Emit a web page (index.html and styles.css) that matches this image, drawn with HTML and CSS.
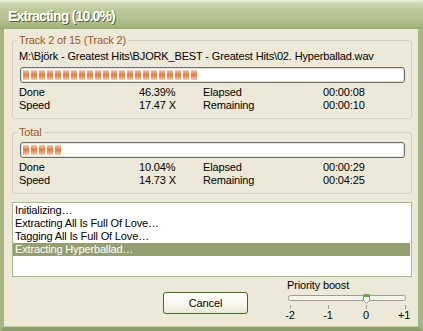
FILE: index.html
```html
<!DOCTYPE html>
<html lang="en">
  <head>
    <meta charset="UTF-8" />
    <meta name="viewport" content="width=device-width, initial-scale=1.0" />
    <title>Extracting (10.0%)</title>
    <link rel="stylesheet" href="styles.css">
  </head>
  <body>
    <div class="window">
      <div class="titlebar">Extracting (10.0%)</div>

      <div class="client">
        <fieldset class="group">
          <legend>Track 2 of 15 (Track 2)</legend>
          <div class="path">M:\Björk - Greatest Hits\BJORK_BEST - Greatest Hits\02. Hyperballad.wav</div>
          <div class="progress">
            <div class="progress-fill" style="width: 46.39%"></div>
          </div>
          <div class="stats">
            <span>Done</span><span>46.39%</span><span>Elapsed</span><span>00:00:08</span>
            <span>Speed</span><span>17.47 X</span><span>Remaining</span><span>00:00:10</span>
          </div>
        </fieldset>

        <fieldset class="group group-total">
          <legend>Total</legend>
          <div class="progress">
            <div class="progress-fill" style="width: 10.04%"></div>
          </div>
          <div class="stats">
            <span>Done</span><span>10.04%</span><span>Elapsed</span><span>00:00:29</span>
            <span>Speed</span><span>14.73 X</span><span>Remaining</span><span>00:04:25</span>
          </div>
        </fieldset>

        <div class="log">
          <div class="log-item">Initializing…</div>
          <div class="log-item">Extracting All Is Full Of Love…</div>
          <div class="log-item">Tagging All Is Full Of Love…</div>
          <div class="log-item selected">Extracting Hyperballad…</div>
        </div>

        <div class="footer">
          <button class="btn-cancel">Cancel</button>
          <div class="priority">
            <div class="priority-label">Priority boost</div>
            <svg class="slider" width="128" height="16" viewBox="0 0 128 16">
              <rect x="5.5" y="2.5" width="117" height="5" rx="2" fill="#f4f4ee" stroke="#9d9d92" />
              <line x1="7.5" y1="12" x2="7.5" y2="16" stroke="#a3a397" />
              <line x1="45.5" y1="12" x2="45.5" y2="16" stroke="#a3a397" />
              <line x1="83.5" y1="12" x2="83.5" y2="16" stroke="#a3a397" />
              <line x1="122.5" y1="12" x2="122.5" y2="16" stroke="#a3a397" />
              <path d="M80.5 1.5 h6 v6 l-3 3 l-3 -3 z" fill="#f7f7f2" stroke="#8c9c70" />
              <rect x="81" y="1" width="5" height="3" fill="#5fb33f" />
            </svg>
            <div class="ticks">
              <span>-2</span><span>-1</span><span>0</span><span>+1</span>
            </div>
          </div>
        </div>
      </div>
    </div>
  </body>
</html>
```

FILE: styles.css
```css
body {
  margin: 0;
  padding: 0;
  font-family: "Liberation Sans", Arial, sans-serif;
  font-size: 11px;
  letter-spacing: -0.15px;
  color: #000;
  background: #ece9d8;
}
.window {
  width: 423px;
  height: 331px;
  display: flex;
  flex-direction: column;
  overflow: hidden;
}
.titlebar {
  height: 29px;
  box-sizing: border-box;
  padding: 8px 0 0 8px;
  line-height: 17px;
  font-size: 14px;
  font-weight: bold;
  letter-spacing: -0.8px;
  color: #fff;
  text-shadow: 1px 1px 0 #56633a;
  background: linear-gradient(
    to bottom,
    #eef2df 0,
    #d3dcb6 3px,
    #bfcb9c 9px,
    #b4c28f 18px,
    #a9b985 25px,
    #98a972 29px
  );
}
.client {
  flex: 1;
  padding: 5px 6px 0 8px;
  border-left: 4px solid #a6b584;
  border-right: 5px solid #a6b584;
  border-bottom: 4px solid #8e9e6b;
  box-shadow: inset 0 -1px 0 #c3cda8;
}
.group {
  margin: 0;
  padding: 3px 6px 6px 6px;
  border: 1px solid #d3d0bd;
  border-radius: 3px;
  min-width: 0;
}
.group legend {
  padding: 0 2px;
  margin-left: -2px;
  line-height: 13px;
  color: #a3561f;
}
.group-total {
  margin-top: 7px;
}
.path {
  line-height: 13px;
  white-space: nowrap;
  margin-bottom: 4px;
}
.progress {
  height: 16px;
  box-sizing: border-box;
  margin-left: 1px;
  padding: 2px;
  border: 1px solid #6b6b6b;
  border-radius: 3px;
  background: #fff;
  box-shadow: inset 0 0 0 1px #e4e4dc;
}
.progress-fill {
  height: 10px;
  background:
    repeating-linear-gradient(to right, transparent 0, transparent 6px, #fff 6px, #fff 8px),
    linear-gradient(to bottom, #f7c7a6 0%, #ef9a66 30%, #e8763d 50%, #ef9a66 70%, #f7c7a6 100%);
}
.stats {
  display: grid;
  grid-template-columns: 120px 64px 120px 1fr;
  line-height: 13px;
  margin-top: 3px;
}
.log {
  margin-top: 8px;
  height: 75px;
  box-sizing: border-box;
  padding: 1px 1px 0 0;
  border: 1px solid #a6b98c;
  background: #fff;
}
.log-item {
  line-height: 13px;
  padding-left: 2px;
  white-space: nowrap;
}
.log-item.selected {
  background: #939f70;
  color: #fff;
}
.footer {
  display: flex;
  align-items: flex-start;
  padding-top: 2px;
}
.btn-cancel {
  margin: 13px 0 0 151px;
  width: 85px;
  height: 22px;
  padding: 0;
  font-family: inherit;
  font-size: 11px;
  letter-spacing: inherit;
  color: #000;
  border: 1px solid #3f6b22;
  border-radius: 3px;
  background: linear-gradient(to bottom, #ffffff 0%, #f8f6ea 60%, #ebe8d6 100%);
}
.priority {
  margin-left: 35px;
  width: 128px;
}
.priority-label {
  line-height: 13px;
  padding-left: 4px;
}
.slider {
  display: block;
  margin-top: 1px;
}
.ticks {
  display: flex;
  justify-content: space-between;
  line-height: 13px;
}
.ticks span {
  width: 14px;
  text-align: center;
}
```
